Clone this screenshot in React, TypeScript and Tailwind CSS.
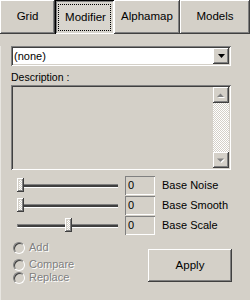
import React from "react";

const raised =
  "shadow-[inset_-1px_-1px_#404040,inset_1px_1px_#ffffff,inset_-2px_-2px_#808080,inset_2px_2px_#d4d0c8]";
const sunken =
  "shadow-[inset_1px_1px_#808080,inset_-1px_-1px_#ffffff,inset_2px_2px_#404040,inset_-2px_-2px_#d4d0c8]";
const checker =
  "bg-[repeating-conic-gradient(#ffffff_0%_25%,#d4d0c8_0%_50%)] bg-[length:2px_2px]";

function Tab({ label, w, active }: { label: string; w: string; active?: boolean }) {
  if (active) {
    return (
      <div
        className={`${w} h-[34px] flex items-center justify-center relative shadow-[inset_1px_1px_#000000,inset_-1px_-1px_#ffffff,inset_2px_2px_#808080] bg-[#d8d5ce]`}
      >
        <div className="absolute left-[3px] top-[4px] right-[3px] bottom-[3px] border border-dotted border-black" />
        <span className="text-[11.5px] leading-none translate-x-[1px] translate-y-[1px]">{label}</span>
      </div>
    );
  }
  return (
    <div className={`${w} h-[34px] flex items-center justify-center ${raised}`}>
      <span className="text-[11.5px] leading-none">{label}</span>
    </div>
  );
}

function Slider({ pos }: { pos: number }) {
  return (
    <div className="relative w-[101px] h-[19px] ml-[6px]">
      <div className="absolute left-0 right-0 top-[8px] h-[3px] bg-[#404040] shadow-[0_1px_#ffffff,inset_1px_1px_#808080]" />
      <div
        className={`absolute top-[2px] w-[7px] h-[14px] ${checker} ${raised}`}
        style={{ left: pos }}
      />
    </div>
  );
}

function Row({ pos, label }: { pos: number; label: string }) {
  return (
    <div className="flex items-center h-[19px]">
      <Slider pos={pos} />
      <div className="ml-[7px] w-[30px] h-[19px] flex items-center pl-[3px] text-[11px] shadow-[inset_1px_1px_#808080,inset_-1px_-1px_#ffffff]">
        0
      </div>
      <div className="ml-[7px] text-[11px] leading-none">{label}</div>
    </div>
  );
}

function Radio({ label, mt }: { label: string; mt: string }) {
  return (
    <div className={`flex items-center h-[13px] ${mt}`}>
      <div className="w-[12px] h-[12px] rounded-full border border-t-[#808080] border-l-[#808080] border-b-white border-r-white bg-[#d4d0c8] shadow-[inset_1px_1px_#404040]" />
      <span className="ml-[4px] text-[11px] leading-none text-[#808080] [text-shadow:1px_1px_0_#ffffff]">
        {label}
      </span>
    </div>
  );
}

function ArrowBtn({ up }: { up?: boolean }) {
  return (
    <div className={`w-[16px] h-[16px] flex items-center justify-center ${raised} bg-[#d4d0c8]`}>
      <svg width="8" height="5" viewBox="0 0 8 5">
        {up ? (
          <>
            <polygon points="4.5,1.5 8,5 1,5" fill="#ffffff" />
            <polygon points="3.5,0.5 7,4 0,4" fill="#808080" />
          </>
        ) : (
          <>
            <polygon points="1,1.5 8,1.5 4.5,5" fill="#ffffff" />
            <polygon points="0,0.5 7,0.5 3.5,4" fill="#808080" />
          </>
        )}
      </svg>
    </div>
  );
}

export default function App() {
  return (
    <div className="w-[250px] h-[300px] bg-[#d4d0c8] text-black font-['Liberation_Sans',Arial,sans-serif] overflow-hidden">
      <div className="flex">
        <Tab label="Grid" w="w-[55px]" />
        <Tab label="Modifier" w="w-[59px]" active />
        <Tab label="Alphamap" w="w-[66px]" />
        <Tab label="Models" w="w-[70px]" />
      </div>
      <div className="pl-[10px] pr-[19px] border-l border-[#e8e6e1] h-[266px]">
        {/* combo */}
        <div className={`mt-[12px] h-[20px] bg-white ${sunken} flex items-center pl-[3px] pr-[2px]`}>
          <span className="text-[11px] leading-none flex-1">(none)</span>
          <div className={`w-[16px] h-[16px] flex items-center justify-center ${raised} bg-[#d4d0c8]`}>
            <svg width="7" height="4" viewBox="0 0 7 4">
              <polygon points="0,0 7,0 3.5,4" fill="#000000" />
            </svg>
          </div>
        </div>
        <div className="mt-[5px] h-[13px] text-[10.5px] leading-[13px]">Description :</div>
        <div className={`mt-[1px] h-[85px] ${sunken} flex justify-end p-[2px]`}>
          <div className="w-[16px] flex flex-col">
            <ArrowBtn up />
            <div className={`flex-1 ${checker}`} />
            <ArrowBtn />
          </div>
        </div>
        <div className="mt-[6px] flex flex-col gap-[1px]">
          <Row pos={0} label="Base Noise" />
          <Row pos={0} label="Base Smooth" />
          <Row pos={48} label="Base Scale" />
        </div>
        <div className="flex">
          <div className="ml-[2px] flex flex-col">
            <Radio label="Add" mt="mt-[6px]" />
            <Radio label="Compare" mt="mt-[4px]" />
            <Radio label="Replace" mt="mt-0" />
          </div>
          <div className={`ml-auto mr-[-1px] mt-[14px] w-[84px] h-[33px] flex items-center justify-center ${raised}`}>
            <span className="text-[11.5px] leading-none">Apply</span>
          </div>
        </div>
      </div>
    </div>
  );
}
